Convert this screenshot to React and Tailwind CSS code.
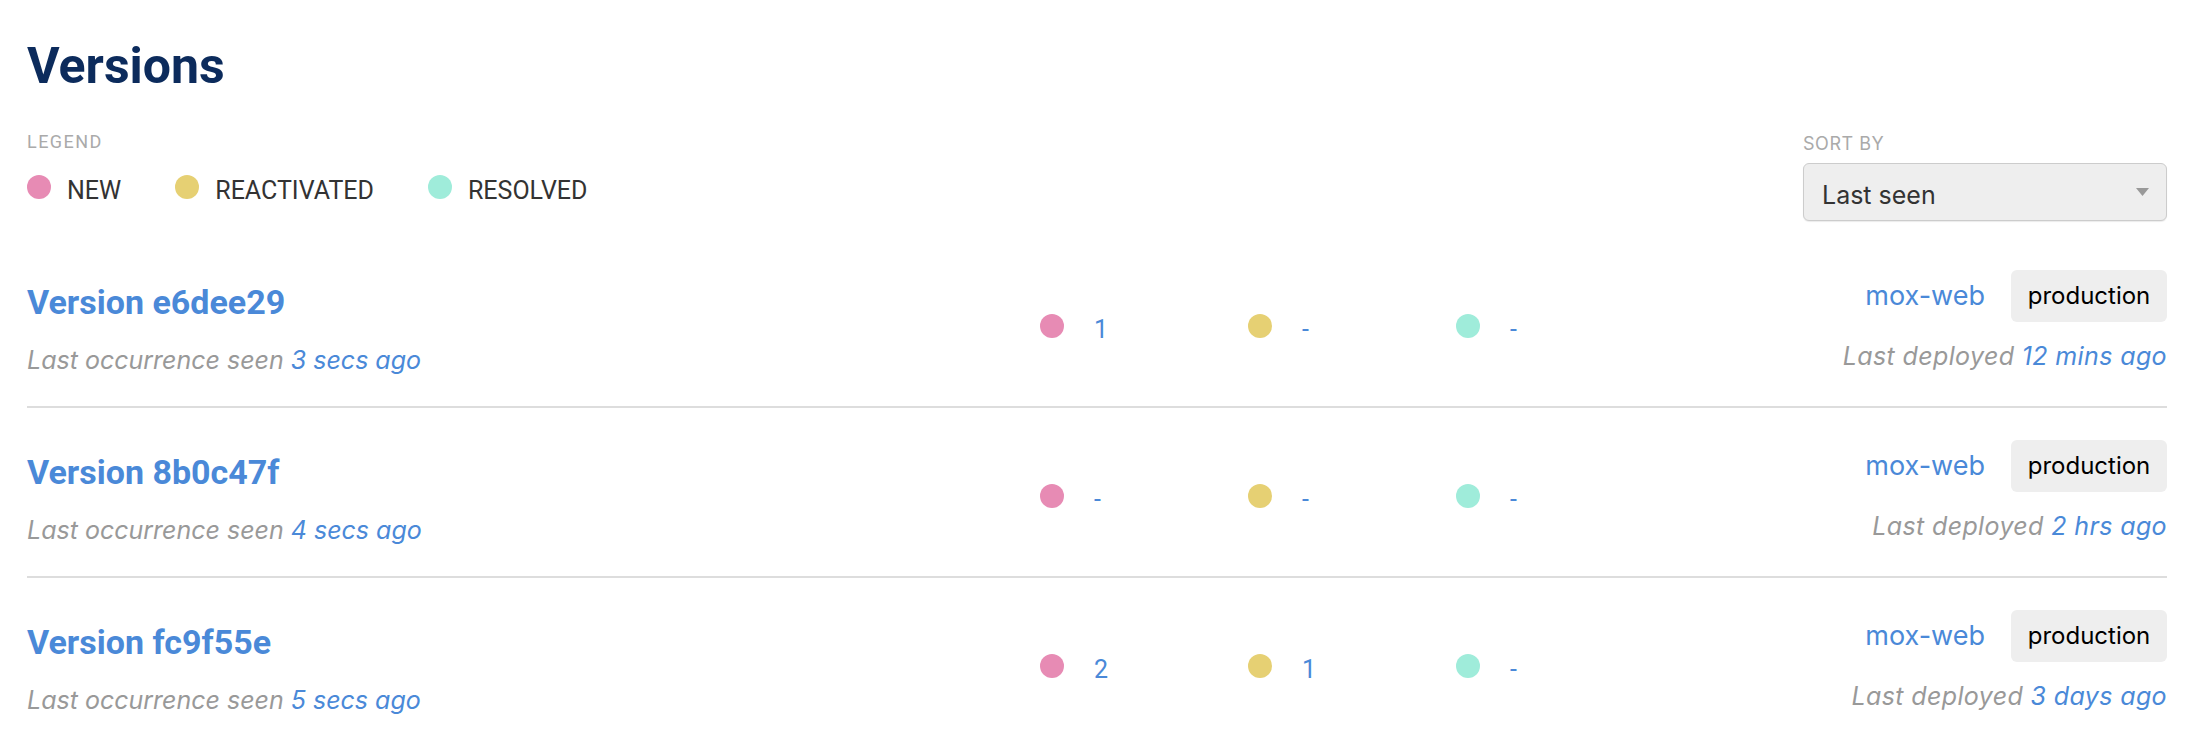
const roboto = { fontFamily: 'Roboto, "Liberation Sans", sans-serif' };
const inter = { fontFamily: 'Inter, "Liberation Sans", sans-serif' };

const versions = [
  { id: 'e6dee29', seen: '3 secs ago', counts: ['1', '-', '-'], deployed: '12 mins ago' },
  { id: '8b0c47f', seen: '4 secs ago', counts: ['-', '-', '-'], deployed: '2 hrs ago' },
  { id: 'fc9f55e', seen: '5 secs ago', counts: ['2', '1', '-'], deployed: '3 days ago' },
];

const dotColors = ['bg-[#e78bb4]', 'bg-[#e6d073]', 'bg-[#9fecda]'];

function LegendItem({ color, label }) {
  return (
    <div className="flex items-center">
      <span className={`w-[24px] h-[24px] rounded-full mb-[7px] ${color}`} />
      <span className="ml-[16px] text-[25px] leading-[25px] text-[#333333]" style={roboto}>
        {label}
      </span>
    </div>
  );
}

function VersionRow({ v }) {
  return (
    <div className="flex items-start h-[170px] pt-[32px] border-b-2 border-[#dddddd]">
      {/* left: name + last occurrence */}
      <div className="w-[1013px] mt-[14px]">
        <div className="text-[34px] leading-[36px] font-bold text-[#4a89d8]" style={roboto}>
          Version {v.id}
        </div>
        <div className="mt-[26px] text-[25px] leading-[28px] italic text-[#999999]" style={inter}>
          Last occurrence seen <span className="text-[#4a89d8]">{v.seen}</span>
        </div>
      </div>

      {/* middle: counters */}
      <div className="flex mt-[44px]">
        {v.counts.map((c, i) => (
          <div key={i} className="w-[208px] flex items-center h-[24px]">
            <span className={`w-[24px] h-[24px] rounded-full ${dotColors[i]}`} />
            <span className="ml-[30px] mt-[7px] text-[25px] leading-[24px] text-[#4a89d8]" style={roboto}>
              {c}
            </span>
          </div>
        ))}
      </div>

      {/* right: app, env, deploy time */}
      <div className="flex-1 flex flex-col items-end">
        <div className="flex items-center gap-[26px] h-[52px]">
          <span className="text-[27px] text-[#4a89d8]" style={inter}>mox-web</span>
          <span className="h-[52px] w-[156px] flex items-center justify-center rounded-[6px] bg-[#eeeeee] text-[24px] text-black" style={inter}>
            production
          </span>
        </div>
        <div className="mt-[20px] text-[25px] leading-[28px] tracking-[0.015em] italic text-[#999999]" style={inter}>
          Last deployed <span className="text-[#4a89d8]">{v.deployed}</span>
        </div>
      </div>
    </div>
  );
}

export default function App() {
  return (
    <div className="min-h-screen bg-white pl-[27px] pr-[31px] pt-[41px]">
      <h1 className="text-[50px] leading-[50px] font-bold text-[#0c2b5c]" style={roboto}>
        Versions
      </h1>

      <div className="mt-[42px] flex justify-between items-start">
        <div>
          <div className="text-[18px] leading-[18px] tracking-[0.08em] text-[#aaaaaa]" style={roboto}>
            LEGEND
          </div>
          <div className="mt-[24px] flex gap-[54px]">
            <LegendItem color="bg-[#e78bb4]" label="NEW" />
            <LegendItem color="bg-[#e6d073]" label="REACTIVATED" />
            <LegendItem color="bg-[#9fecda]" label="RESOLVED" />
          </div>
        </div>

        <div className="w-[364px] mt-[2px]">
          <div className="text-[18px] leading-[18px] tracking-[0.03em] text-[#aaaaaa]" style={inter}>
            SORT BY
          </div>
          <div className="mt-[10px] h-[58px] flex items-center justify-between pl-[18px] pr-[17px] pt-[6px] rounded-[6px] border border-[#cccccc] bg-[#eeeeee] shadow-[0_1px_1px_rgba(0,0,0,0.08)]">
            <span className="text-[25px] leading-[25px] text-[#333333]" style={inter}>Last seen</span>
            <svg width="13" height="8" viewBox="0 0 13 8" className="-mt-[6px]">
              <path d="M0 0 H13 L6.5 8 Z" fill="#999999" />
            </svg>
          </div>
        </div>
      </div>

      <div className="mt-[17px]">
        {versions.map((v) => (
          <VersionRow key={v.id} v={v} />
        ))}
      </div>
    </div>
  );
}
